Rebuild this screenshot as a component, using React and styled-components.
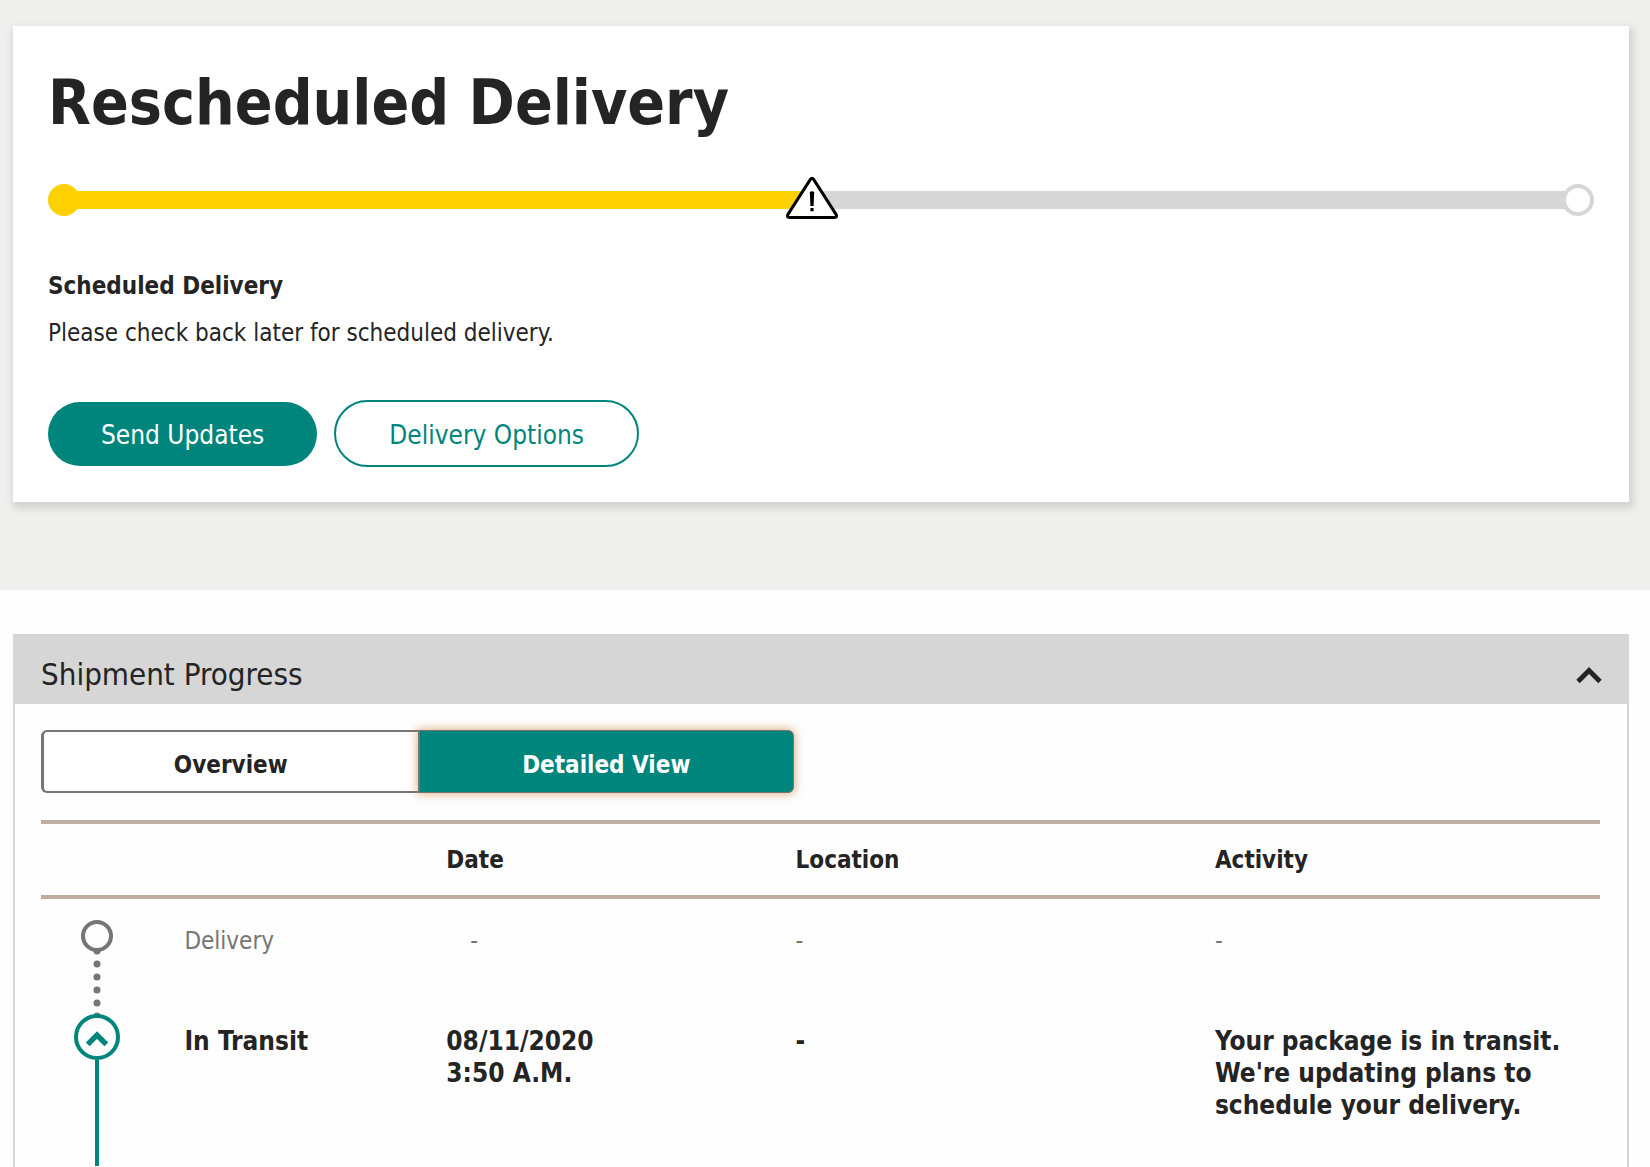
import { useState } from "react";
import styled, { createGlobalStyle } from "styled-components";

const GlobalStyle = createGlobalStyle`
  * {
    box-sizing: border-box;
  }
  body {
    margin: 0;
    background: #fefefe;
    color: #242424;
    font-family: Tahoma, "DejaVu Sans Condensed", "Noto Sans", sans-serif;
    font-size: 24px;
    line-height: 32px;
  }
  button {
    font-family: inherit;
    cursor: pointer;
  }
`

const Page = styled.div`
  display: flex;
  flex-direction: column;
  min-height: 100vh;
`

const StatusSection = styled.section`
  background: #efefed;
  padding: 26px 21px 88px 13px;
`

const Card = styled.div`
  background: white;
  padding: 34px 35px 35px;
  box-shadow: 2px 4px 8px 2px rgba(0, 0, 0, 0.13);
`

const Title = styled.h1`
  margin: 0;
  font-size: 62px;
  line-height: 86px;
  font-weight: bold;
`

const Track = styled.div`
  position: relative;
  display: flex;
  align-items: center;
  height: 32px;
  margin-top: 38px;
`

const Bar = styled.div`
  flex: 1;
  height: 18px;
  margin: 0 -4px;
  background: linear-gradient(to right, #ffd100 calc(50% - 10px), #d6d6d6 0);
`

const Dot = styled.span`
  position: relative;
  width: 32px;
  height: 32px;
  border-radius: 50%;
  border: 4px solid ${(props) => (props.$done ? "#ffd100" : "#d6d6d6")};
  background: ${(props) => (props.$done ? "#ffd100" : "white")};
`

const Warning = styled.svg`
  position: absolute;
  left: calc(50% - 36px);
  bottom: -4px;
  width: 54px;
  height: 44px;
`

const Heading = styled.h2`
  margin: 54px 0 0;
  font-size: 24px;
  line-height: 32px;
`

const Message = styled.p`
  margin: 15px 0 0;
`

const Actions = styled.div`
  display: flex;
  align-items: center;
  flex-wrap: wrap;
  gap: 17px;
  margin-top: 51px;
`

const ActionButton = styled.button`
  height: ${(props) => (props.$outline ? "67px" : "64px")};
  padding: 2px 53px 0;
  border: ${(props) => (props.$outline ? "2px solid #00857c" : "none")};
  border-radius: 34px;
  background: ${(props) => (props.$outline ? "white" : "#00857c")};
  color: ${(props) => (props.$outline ? "#00857c" : "white")};
  font-size: 26px;
  line-height: 32px;
`

const Panel = styled.section`
  flex: 1;
  margin: 44px 21px 0 13px;
  border: 2px solid #d6d6d6;
  border-width: 0 2px;
`

const PanelTitle = styled.h2`
  margin: 0;
  font-weight: normal;
`

const PanelToggle = styled.button`
  display: flex;
  align-items: center;
  justify-content: space-between;
  width: 100%;
  height: 70px;
  padding: 9px 25px 0 26px;
  border: none;
  background: #d6d6d6;
  color: #242424;
  font-size: 31px;
  line-height: 40px;
`

const PanelBody = styled.div`
  padding: 26px 27px 0 26px;
`

const Tabs = styled.div`
  display: flex;
  max-width: 753px;
`

const Tab = styled.button`
  width: 50%;
  height: 63px;
  padding: 6px 0 0;
  border: 2px solid #757575;
  font-size: 24px;
  line-height: 32px;
  font-weight: bold;
  color: ${(props) => (props.$active ? "white" : "#242424")};
  background: ${(props) => (props.$active ? "#00857c" : "white")};

  &:first-child {
    border-width: 2px 0 2px 3px;
    border-radius: 6px 0 0 6px;
  }
  &:last-child {
    border-width: 1px 1px 1px 2px;
    border-radius: 0 6px 6px 0;
  }
  ${(props) => props.$active && `
    box-shadow: 0 0 10px 1px rgba(205, 125, 50, 0.6);
  `}
`

const Table = styled.table`
  width: 100%;
  margin-top: 27px;
  table-layout: fixed;
  border-collapse: collapse;
  text-align: left;
`

const Col = styled.col`
  width: ${(props) => props.$width};
`

const HeadCell = styled.th`
  height: 75px;
  padding: 0;
  border-top: 4px solid #bcaea0;
  border-bottom: 4px solid #bcaea0;
`

const Cell = styled.td`
  padding: 11px 24px 0 0;
  vertical-align: top;
  font-size: 26px;
  font-weight: bold;
`

const MutedCell = styled(Cell)`
  padding: ${(props) => (props.$indent ? "26px 0 0 24px" : "26px 24px 0 0")};
  color: #757575;
  font-size: 24px;
  font-weight: normal;
`

const MarkerCell = styled.td`
  padding: ${(props) => (props.$first ? "21px" : "0")} 32px 0 0;
  vertical-align: top;
`

const Marker = styled.div`
  display: flex;
  flex-direction: column;
  align-items: center;
`

const Ring = styled.span`
  width: 32px;
  height: 32px;
  border: 4px solid #757575;
  border-radius: 50%;
`

const Dots = styled.svg`
  display: block;
  width: 8px;
  height: 64px;
  margin: -1px 0 -1px 1px;
`

const StepToggle = styled.button`
  display: flex;
  align-items: center;
  justify-content: center;
  width: 46px;
  height: 46px;
  padding: 2px 0 0;
  border: 4px solid #00857c;
  border-radius: 50%;
  background: white;
  color: #00857c;
`

const Line = styled.div`
  width: 4px;
  height: 106px;
  background: #00857c;
`

function Chevron({ size, weight }) {
  return (
    <svg width={size} height={size} viewBox="0 0 26 26" fill="none" stroke="currentColor" strokeWidth={weight} aria-hidden="true">
      <path d="M2 20.5 L13 9.5 L24 20.5" />
    </svg>
  );
}

function App() {

  const [open,setOpen] = useState(true);
  const [tab,setTab] = useState("Detailed View");

  return (
    <Page>
      <GlobalStyle />

      <StatusSection>
        <Card>
          <Title>Rescheduled Delivery</Title>

          <Track>
            <Dot $done />
            <Bar />
            <Dot />
            <Warning viewBox="0 0 54 44" aria-hidden="true">
              <path d="M25.2 3.6 Q27 1 28.8 3.6 L51.2 38.6 Q52.4 41.5 49.5 41.5 L4.5 41.5 Q1.6 41.5 2.8 38.6 Z" fill="white" stroke="black" strokeWidth="3" strokeLinejoin="round" />
              <path d="M24.8 16 Q27 14.6 29.2 16 L28.6 30 H25.4 Z M25.4 32 H28.6 V35.2 H25.4 Z" />
            </Warning>
          </Track>

          <Heading>Scheduled Delivery</Heading>
          <Message>Please check back later for scheduled delivery.</Message>

          <Actions>
            <ActionButton>Send Updates</ActionButton>
            <ActionButton $outline>Delivery Options</ActionButton>
          </Actions>
        </Card>
      </StatusSection>

      <Panel>
        <PanelTitle>
          <PanelToggle aria-expanded={open} onClick={()=>{setOpen(!open)}}>
            Shipment Progress
            <Chevron size={26} weight={4.8} />
          </PanelToggle>
        </PanelTitle>

        {open && (
          <PanelBody>
            <Tabs>
              {["Overview","Detailed View"].map((name)=>(
                <Tab key={name} $active={tab === name} aria-pressed={tab === name} onClick={()=>{setTab(name)}}>{name}</Tab>
              ))}
            </Tabs>

            <Table>
              <colgroup>
                <Col $width="9.2%" />
                <Col $width="16.8%" />
                <Col $width="22.4%" />
                <Col $width="26.9%" />
                <Col />
              </colgroup>
              <thead>
                <tr>
                  <HeadCell />
                  <HeadCell />
                  <HeadCell>Date</HeadCell>
                  <HeadCell>Location</HeadCell>
                  <HeadCell>Activity</HeadCell>
                </tr>
              </thead>
              <tbody>
                <tr>
                  <MarkerCell $first>
                    <Marker>
                      <Ring />
                      <Dots viewBox="0 0 8 64" fill="#757575">
                        {[0,13,26,39,52,65].map((y)=>(
                          <circle key={y} cx="4" cy={y} r="3.5" />
                        ))}
                      </Dots>
                    </Marker>
                  </MarkerCell>
                  <MutedCell>Delivery</MutedCell>
                  <MutedCell $indent>-</MutedCell>
                  <MutedCell>-</MutedCell>
                  <MutedCell>-</MutedCell>
                </tr>
                <tr>
                  <MarkerCell>
                    <Marker>
                      <StepToggle aria-label="In Transit">
                        <Chevron size={22} weight={6.5} />
                      </StepToggle>
                      <Line />
                    </Marker>
                  </MarkerCell>
                  <Cell>In Transit</Cell>
                  <Cell>08/11/2020<br />3:50 A.M.</Cell>
                  <Cell>-</Cell>
                  <Cell>Your package is in transit. We're updating plans to schedule your delivery.</Cell>
                </tr>
              </tbody>
            </Table>
          </PanelBody>
        )}
      </Panel>
    </Page>
  );
}

export default App;
